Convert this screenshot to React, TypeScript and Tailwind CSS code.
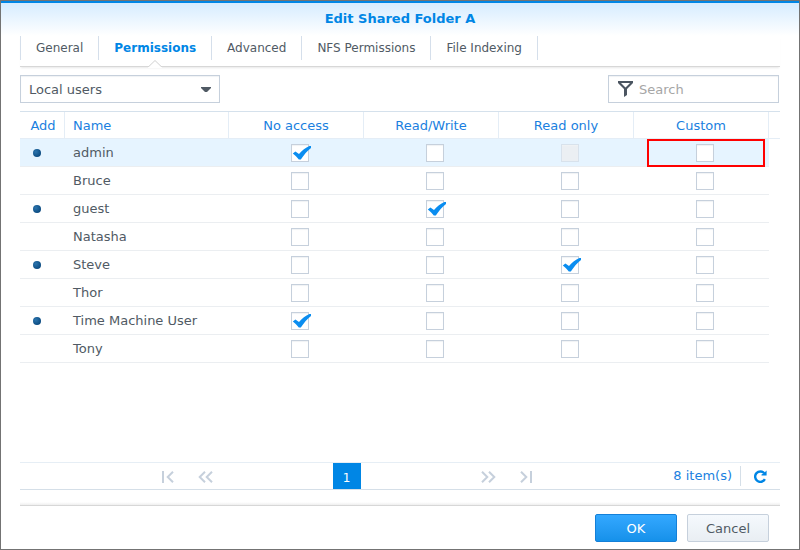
import React, {useState} from "react";

const tabs = ["General", "Permissions", "Advanced", "NFS Permissions", "File Indexing"];
const columns = ["No access", "Read/Write", "Read only", "Custom"];

interface User {
    name: string;
    access: string | null;
    disabled?: string;
    selected?: boolean;
}

const initialUsers: User[] = [
    {name: "admin", access: "No access", disabled: "Read only", selected: true},
    {name: "Bruce", access: null},
    {name: "guest", access: "Read/Write"},
    {name: "Natasha", access: null},
    {name: "Steve", access: "Read only"},
    {name: "Thor", access: null},
    {name: "Time Machine User", access: "No access"},
    {name: "Tony", access: null},
];

interface CheckBoxProps {
    label: string;
    checked: boolean;
    disabled?: boolean;
    onChange: () => void;
}

const CheckBox = ({label, checked, disabled, onChange}: CheckBoxProps) => (
    <label className="relative block h-[18px] w-[18px]">
        <input
            type="checkbox"
            aria-label={label}
            checked={checked}
            disabled={disabled}
            onChange={onChange}
            className="block h-[18px] w-[18px] appearance-none border border-[#c6d0dc] bg-white shadow-[inset_0_1px_1px_#f0f2f4] disabled:border-[#d8e2ec] disabled:bg-[#ebeff3]"
        />
        {checked && (
            <svg viewBox="0 0 20 18" className="pointer-events-none absolute left-0 top-0 h-[18px] w-5 max-w-none">
                <path
                    d="M1.800 9.400 4.400 7.600 8 10C11 6.800 14.600 3.400 18.400 2H20V4C16 7 12.600 11.400 9.800 15.600H7.800C6.200 13.200 4.400 11.200 1.800 9.400Z"
                    fill="#0a8df0"
                />
            </svg>
        )}
    </label>
);

const PagerIcon = ({d}: {d: string}) => (
    <svg viewBox="0 0 16 12" className="h-3 w-4" fill="none" stroke="#c6d0dc" strokeWidth="2">
        <path d={d} />
    </svg>
);

function App() {
    const [activeTab, setActiveTab] = useState("Permissions");
    const [users, setUsers] = useState(initialUsers);

    const toggle = (name: string, column: string) => {
        setUsers(users.map((u) => (u.name === name ? {...u, access: u.access === column ? null : column} : u)));
    };

    return (
        <div className="flex min-h-screen flex-col border border-[#737373] bg-white font-['Verdana','DejaVu_Sans',sans-serif] text-[13px] text-[#505a64]">
            <header className="h-[35px] border-t-2 border-[#0086e5] bg-linear-to-b from-[#d6ecff] to-white">
                <h1 className="pt-1.5 text-center text-[13px] leading-5 font-bold text-[#0086e5]">
                    Edit Shared Folder A
                </h1>
            </header>

            <main className="flex flex-1 flex-col px-[19px]">
                <nav className="flex h-[31px] border-b border-[#d7d7d7] shadow-[0_2px_2px_-1px_#e8e8e8]">
                    {tabs.map((tab) => (
                        <button
                            key={tab}
                            onClick={() => setActiveTab(tab)}
                            className={`relative h-6 border-r border-[#d5dfeb] px-[15px] text-xs first:border-l ${
                                activeTab === tab ? "font-bold text-[#0086e5]" : ""
                            }`}
                        >
                            {tab}
                            {activeTab === tab && (
                                <svg viewBox="0 0 14 8" className="absolute left-1/2 top-6 h-2 w-3.5 -translate-x-1/2">
                                    <path d="M0 8V7L7 0L14 7V8Z" fill="#fff" />
                                    <path d="M0 6.500H.8L7 .5L13.200 6.500H14" fill="none" stroke="#d0d0d0" />
                                </svg>
                            )}
                        </button>
                    ))}
                </nav>

                <div className="mt-2 flex justify-between">
                    <div className="relative w-[200px]">
                        <select
                            aria-label="User type"
                            className="h-7 w-full appearance-none border border-[#c6d0dc] bg-white px-2 pt-0.5 shadow-[inset_0_1px_1px_#f0f2f4] outline-none"
                        >
                            <option>Local users</option>
                            <option>Local groups</option>
                        </select>
                        <svg viewBox="0 0 10 5" className="pointer-events-none absolute right-[9px] top-3 h-[5px] w-2.5">
                            <path d="M0 0H10V1L6 5H4L0 1Z" fill="#505a64" />
                        </svg>
                    </div>
                    <label className="mr-px flex h-7 w-[171px] items-center gap-1.5 border border-[#c6d0dc] px-2 pl-[9px] shadow-[inset_0_1px_1px_#f0f2f4]">
                        <svg viewBox="0 0 15 16" className="h-4 w-[15px] shrink-0">
                            <path d="M0 0H15V2L9 8V14L6 16V8L0 2ZM3 2L7.500 6.500L12 2Z" fill="#4b5561" fillRule="evenodd" />
                        </svg>
                        <input
                            type="text"
                            aria-label="Search"
                            placeholder="Search"
                            className="w-full min-w-0 pt-0.5 outline-none placeholder:text-[#a6a6a6]"
                        />
                    </label>
                </div>

                <div className="mt-2 flex-1 border-t border-[#d5e1ec]">
                    <table className="w-full table-fixed border-separate border-spacing-0">
                        <thead>
                            <tr className="h-[27px] text-[#1a7fe0] *:border-b *:border-[#e4edf6] *:pt-0.5 *:pb-0 *:font-normal">
                                <th className="w-[45px] border-r pl-0.5">Add</th>
                                <th className="border-r pl-2 text-left">Name</th>
                                {columns.map((column) => (
                                    <th key={column} className="w-[135px] border-r">
                                        {column}
                                    </th>
                                ))}
                                <th className="w-[11px]" />
                            </tr>
                        </thead>
                        <tbody>
                            {users.map((user) => (
                                <tr key={user.name} className="h-7">
                                    <td
                                        className={`border-b border-[#ebeef1] p-0 pl-[13px] ${user.selected ? "bg-[#e6f4ff]" : ""}`}
                                    >
                                        {user.access && (
                                            <div className="h-2 w-2 rounded-full bg-radial-[at_35%_35%] from-[#2b74ad] to-[#003c71]" />
                                        )}
                                    </td>
                                    <td
                                        className={`border-b border-[#ebeef1] p-0 pl-2 ${user.selected ? "bg-[#e6f4ff]" : ""}`}
                                    >
                                        {user.name}
                                    </td>
                                    {columns.map((column) => (
                                        <td
                                            key={column}
                                            className={`relative border-b border-[#ebeef1] p-0 pl-[62px] ${
                                                user.selected ? "bg-[#e6f4ff]" : ""
                                            }`}
                                        >
                                            <CheckBox
                                                label={`${user.name} ${column}`}
                                                checked={user.access === column}
                                                disabled={user.disabled === column}
                                                onChange={() => toggle(user.name, column)}
                                            />
                                            {user.selected && column === "Custom" && (
                                                <div className="pointer-events-none absolute top-0 right-1 -bottom-px left-[13px] border-2 border-[#ff0000]" />
                                            )}
                                        </td>
                                    ))}
                                    <td className="p-0" />
                                </tr>
                            ))}
                        </tbody>
                    </table>
                </div>

                <div className="flex h-7 items-center border-y border-t-[#e6eef5] border-b-[#d5dfe8]">
                    <div className="flex flex-1 items-center justify-center">
                        <div className="flex flex-1 justify-end gap-[21px] pr-[120px]">
                            <button aria-label="First page" className="pt-0.5">
                                <PagerIcon d="M3 0V12M13 0.700L7.700 6L13 11.300" />
                            </button>
                            <button aria-label="Previous page" className="pt-0.5">
                                <PagerIcon d="M8 0.700L2.700 6L8 11.300M15 0.700L9.700 6L15 11.300" />
                            </button>
                        </div>
                        <button className="h-[26px] w-7 bg-[#0086e5] pt-1 text-xs text-white">1</button>
                        <div className="flex flex-1 gap-[21px] pl-[120px]">
                            <button aria-label="Next page" className="pt-0.5">
                                <PagerIcon d="M1 0.700L6.300 6L1 11.300M8 0.700L13.300 6L8 11.300" />
                            </button>
                            <button aria-label="Last page" className="pt-0.5">
                                <PagerIcon d="M3 0.700L8.300 6L3 11.300M13 0V12" />
                            </button>
                        </div>
                    </div>
                    <span className="pr-2 text-[#1a7fe0]">8 item(s)</span>
                    <button aria-label="Refresh" className="h-5 border-l border-[#d5dfe8] pr-[13px] pl-[13px]">
                        <svg viewBox="0 0 13 13" className="h-[13px] w-[13px]">
                            <path d="M10.900 9.200A5.200 5.200 0 1 1 10.300 3.300" fill="none" stroke="#0086e5" strokeWidth="2.400" />
                            <path d="M12.600 0.500V5.500H7.500V4.400L9.500 3.400Z" fill="#0086e5" />
                        </svg>
                    </button>
                </div>

                <div className="mt-3 h-1 border-b border-[#d7d7d7] bg-linear-to-b from-white to-[#efefef]" />
                <footer className="flex justify-end gap-2.5 pt-2 pr-[11px] pb-[7px]">
                    <button className="h-7 w-[82px] rounded-xs border border-[#1480d8] bg-linear-to-b from-[#33a8ff] to-[#1591ea] pt-px text-white">
                        OK
                    </button>
                    <button className="h-7 w-[82px] rounded-xs border border-[#c6d0dc] bg-linear-to-b from-[#f5f9fd] to-[#e9eef3] pt-px">
                        Cancel
                    </button>
                </footer>
            </main>
        </div>
    );
}

export default App;
